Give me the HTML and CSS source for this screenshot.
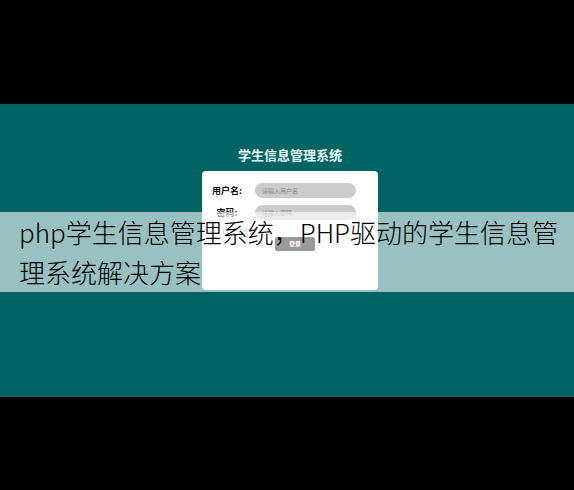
FILE: index.html
```
<!DOCTYPE html>
<html lang="zh-CN">
<head>
<meta charset="UTF-8" />
<meta name="viewport" content="width=device-width, initial-scale=1" />
<title>学生信息管理系统</title>
<link rel="stylesheet" href="styles.css">
</head>
<body>

<main class="stage">
  <h1>学生信息管理系统</h1>
  <form class="login-card">
    <div class="field">
      <label for="username">用户名:</label>
      <input type="text" id="username" name="username" placeholder="请输入用户名" />
    </div>
    <div class="field">
      <label for="password">密码:</label>
      <input type="password" id="password" name="password" placeholder="请输入密码" />
    </div>
    <div class="remember">
      <input type="checkbox" id="remember" name="remember" />
      <label for="remember">记住我</label>
    </div>
    <button type="button" class="login-btn">登录</button>
  </form>
</main>

<!-- Caption over the login page -->
<p class="caption">php学生信息管理系统，PHP驱动的学生信息管理系统解决方案</p>

</body>
</html>
```
FILE: styles.css
```
* {
  box-sizing: border-box;
}

body {
  margin: 0;
  padding: 104px 0 92px;
  background: #000;
  font-family: "Noto Sans CJK SC", sans-serif;
}

.stage {
  display: flex;
  flex-direction: column;
  align-items: center;
  gap: 8px;
  padding: 43px 0 107px 6px;
  background: #006464;
}

h1 {
  margin: 0;
  font-size: 13px;
  line-height: 16px;
  font-weight: 700;
  color: #e8fafa;
}

/* Login card */
.login-card {
  display: flex;
  flex-direction: column;
  width: 176px;
  min-height: 119px;
  padding: 12px 10px;
  border-radius: 4px;
  background: #fff;
}

.field {
  display: flex;
  align-items: center;
  gap: 13px;
  margin-bottom: 7px;
}

.field label {
  width: 30px;
  font-size: 9px;
  line-height: 12px;
  font-weight: 700;
  text-align: center;
  white-space: nowrap;
  color: #111;
}

.field input {
  width: 101px;
  height: 15px;
  padding: 0 7px;
  border: none;
  border-radius: 8px;
  outline: none;
  background: #ccc;
  font-family: inherit;
  font-size: 6px;
}

.field input::placeholder {
  color: #888;
}

.remember {
  display: flex;
  align-items: center;
  gap: 2px;
  height: 8px;
  padding-left: 11px;
}

.remember input {
  appearance: none;
  width: 5px;
  height: 5px;
  margin: 0;
  border: 1px solid #aaa;
}

.remember label {
  font-size: 6px;
  line-height: 8px;
  color: #999;
}

.login-btn {
  width: 40px;
  height: 14px;
  margin: 2px 0 0 63px;
  padding: 0;
  border: none;
  border-radius: 2px;
  background: #000;
  color: #fff;
  font-family: inherit;
  font-size: 6px;
  line-height: 14px;
  font-weight: 700;
}

/* Translucent caption band */
.caption {
  position: absolute;
  top: 212px;
  left: 0;
  right: 0;
  margin: 0;
  padding: 0 10px 0 19px;
  background: rgba(255, 255, 255, 0.6);
  color: #000;
  font-family: "Noto Sans CJK SC", sans-serif;
  font-size: 26px;
  line-height: 40px;
  font-weight: 200;
}
```
